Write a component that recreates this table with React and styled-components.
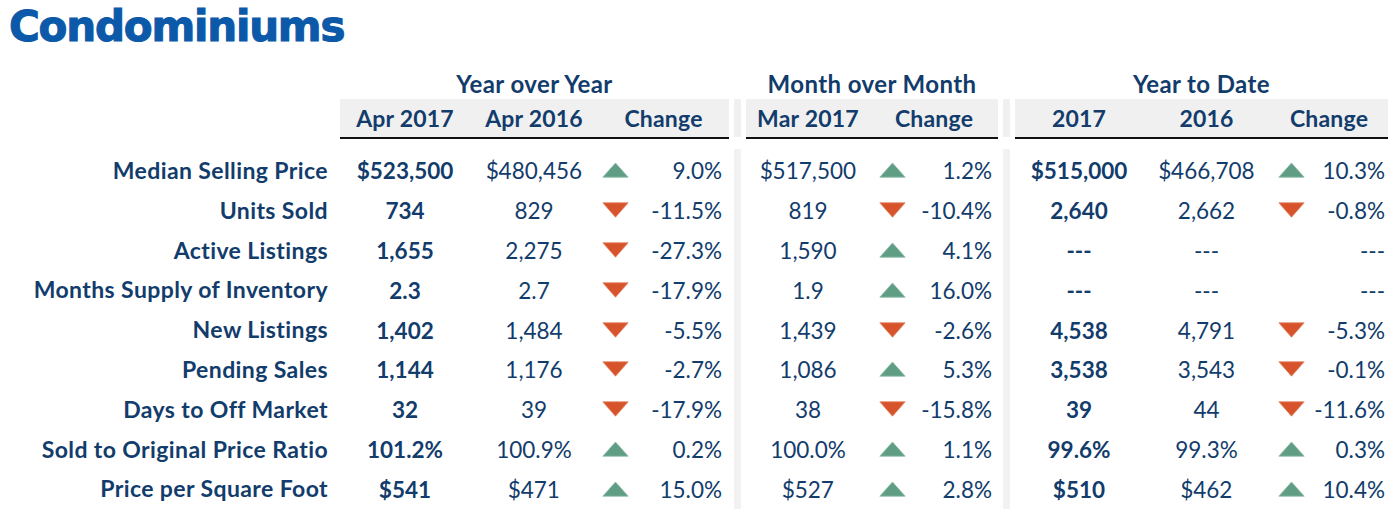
import styled, { createGlobalStyle } from "styled-components";

const GlobalStyle = createGlobalStyle`
  html, body {
    margin: 0;
    padding: 0;
    background: #ffffff;
  }
  body {
    font-family: Lato, "Open Sans", sans-serif;
    font-variant-numeric: lining-nums;
    font-feature-settings: "lnum" 1;
    color: #123c6c;
  }
`;

// ===== DATA =====
const sections = [
  {
    title: "Year over Year",
    cols: [130, 128, 131],
    heads: ["Apr 2017", "Apr 2016", "Change"],
    triPad: 4,
    pctPad: 7,
  },
  {
    title: "Month over Month",
    cols: [124, 128],
    heads: ["Mar 2017", "Change"],
    triPad: 9,
    pctPad: 6,
  },
  {
    title: "Year to Date",
    cols: [128, 127, 118],
    heads: ["2017", "2016", "Change"],
    triPad: 8,
    pctPad: 3,
  },
];

// each row: label, then per section [values..., [dir, pct]]
const rows = [
  ["Median Selling Price", [["$523,500", "$480,456"], ["up", "9.0%"]], [["$517,500"], ["up", "1.2%"]], [["$515,000", "$466,708"], ["up", "10.3%"]]],
  ["Units Sold", [["734", "829"], ["down", "-11.5%"]], [["819"], ["down", "-10.4%"]], [["2,640", "2,662"], ["down", "-0.8%"]]],
  ["Active Listings", [["1,655", "2,275"], ["down", "-27.3%"]], [["1,590"], ["up", "4.1%"]], [["---", "---"], [null, "---"]]],
  ["Months Supply of Inventory", [["2.3", "2.7"], ["down", "-17.9%"]], [["1.9"], ["up", "16.0%"]], [["---", "---"], [null, "---"]]],
  ["New Listings", [["1,402", "1,484"], ["down", "-5.5%"]], [["1,439"], ["down", "-2.6%"]], [["4,538", "4,791"], ["down", "-5.3%"]]],
  ["Pending Sales", [["1,144", "1,176"], ["down", "-2.7%"]], [["1,086"], ["up", "5.3%"]], [["3,538", "3,543"], ["down", "-0.1%"]]],
  ["Days to Off Market", [["32", "39"], ["down", "-17.9%"]], [["38"], ["down", "-15.8%"]], [["39", "44"], ["down", "-11.6%"]]],
  ["Sold to Original Price Ratio", [["101.2%", "100.9%"], ["up", "0.2%"]], [["100.0%"], ["up", "1.1%"]], [["99.6%", "99.3%"], ["up", "0.3%"]]],
  ["Price per Square Foot", [["$541", "$471"], ["up", "15.0%"]], [["$527"], ["up", "2.8%"]], [["$510", "$462"], ["up", "10.4%"]]],
];

const ROW_H = 39.8;

// ===== LAYOUT =====
const Page = styled.div`
  width: 1394px;
  height: 524px;
  overflow: hidden;
`;

const Title = styled.h1`
  margin: 0 0 17px;
  padding-left: 9px;
  height: 52px;
  font-family: "DejaVu Sans", "Liberation Sans", sans-serif;
  font-weight: 700;
  font-size: 42px;
  line-height: 54px;
  letter-spacing: -1.2px;
  color: #0b59a8;
  -webkit-text-stroke: 1.1px #0b59a8;
`;

const Table = styled.div`
  display: flex;
  align-items: stretch;
`;

const LabelCol = styled.div`
  width: 340px;
  display: flex;
  flex-direction: column;
  padding-top: 82px;
`;

const Label = styled.div`
  height: ${ROW_H}px;
  line-height: ${ROW_H}px;
  padding-right: 12px;
  text-align: right;
  font-size: 23px;
  letter-spacing: 0.4px;
  font-weight: 700;
  white-space: nowrap;
`;

const Section = styled.div`
  display: flex;
  flex-direction: column;
`;

const GroupTitle = styled.div`
  height: 30px;
  line-height: 30px;
  text-align: center;
  font-size: 24px;
  letter-spacing: 0.4px;
  font-weight: 700;
  white-space: nowrap;
`;

const HeadBand = styled.div`
  display: grid;
  grid-template-columns: ${(p) => p.$cols};
  height: 38px;
  align-items: center;
  background: #f0f0f0;
  border-bottom: 2px solid #111;
`;

const HeadCell = styled.div`
  text-align: center;
  font-size: 23px;
  letter-spacing: 0.2px;
  font-weight: 700;
  white-space: nowrap;
`;

const Body = styled.div`
  margin-top: 12px;
  display: flex;
  flex-direction: column;
`;

const Row = styled.div`
  display: grid;
  grid-template-columns: ${(p) => p.$cols};
  height: ${ROW_H}px;
  align-items: center;
`;

const Cell = styled.div`
  text-align: center;
  font-size: 22.5px;
  font-weight: ${(p) => (p.$bold ? 700 : 400)};
  white-space: nowrap;
`;

const ChangeCell = styled.div`
  display: flex;
  align-items: center;
  padding-left: ${(p) => p.$tri}px;
  padding-right: ${(p) => p.$pct}px;
  font-size: 22.5px;
  white-space: nowrap;
`;

const Pct = styled.span`
  margin-left: auto;
`;

const Sep = styled.div`
  width: 7px;
  margin: 0 5px;
  display: flex;
  flex-direction: column;
  padding-top: 30px;
`;

const SepHead = styled.div`
  height: 38px;
  background: #f0f0f0;
`;

const SepBody = styled.div`
  flex: 1;
  margin-top: 12px;
  background: #f2f2f2;
`;

// ===== ICONS =====
function Arrow({ dir }) {
  if (dir === "up") {
    return (
      <svg width="27" height="16" viewBox="0 0 27 16" style={{ marginTop: -1 }}>
        <polygon points="0.8,15.2 13.5,1 26.2,15.2" fill="#5f9e84" stroke="#8cbba6" strokeWidth="0.8" />
      </svg>
    );
  }
  return (
    <svg width="27" height="16" viewBox="0 0 27 16" style={{ marginTop: -1 }}>
      <polygon points="0.8,0.8 26.2,0.8 13.5,15.2" fill="#d7532c" stroke="#e58463" strokeWidth="0.8" />
    </svg>
  );
}

// ===== COMPONENT =====
export default function App() {
  const parts = [];
  sections.forEach((s, si) => {
    if (si > 0) {
      parts.push(
        <Sep key={`sep${si}`}>
          <SepHead />
          <SepBody />
        </Sep>
      );
    }
    const cols = s.cols.map((c) => `${c}px`).join(" ");
    parts.push(
      <Section key={s.title}>
        <GroupTitle>{s.title}</GroupTitle>
        <HeadBand $cols={cols}>
          {s.heads.map((h) => (
            <HeadCell key={h}>{h}</HeadCell>
          ))}
        </HeadBand>
        <Body>
          {rows.map((r) => {
            const [vals, [dir, pct]] = r[si + 1];
            return (
              <Row key={r[0]} $cols={cols}>
                {vals.map((v, vi) => (
                  <Cell key={vi} $bold={vi === 0 && si !== 1}>
                    {v}
                  </Cell>
                ))}
                <ChangeCell $tri={s.triPad} $pct={s.pctPad}>
                  {dir && <Arrow dir={dir} />}
                  <Pct>{pct}</Pct>
                </ChangeCell>
              </Row>
            );
          })}
        </Body>
      </Section>
    );
  });

  return (
    <Page>
      <GlobalStyle />
      <Title>Condominiums</Title>
      <Table>
        <LabelCol>
          {rows.map((r) => (
            <Label key={r[0]}>{r[0]}</Label>
          ))}
        </LabelCol>
        {parts}
      </Table>
    </Page>
  );
}
